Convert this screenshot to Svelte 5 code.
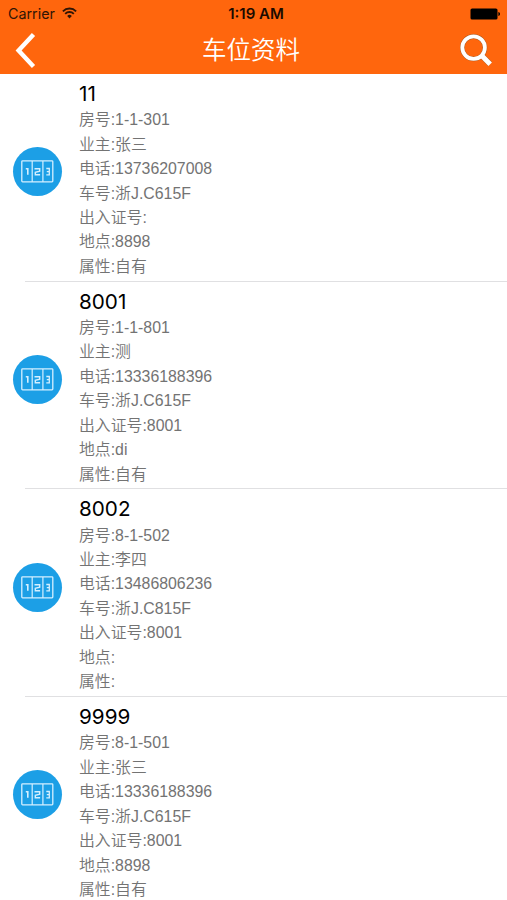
<script>
  const fields = [
    ['room', '房号'],
    ['owner', '业主'],
    ['phone', '电话'],
    ['plate', '车号'],
    ['pass', '出入证号'],
    ['place', '地点'],
    ['kind', '属性']
  ];

  const spaces = [
    { name: '11', room: '1-1-301', owner: '张三', phone: '13736207008', plate: '浙J.C615F', pass: '', place: '8898', kind: '自有' },
    { name: '8001', room: '1-1-801', owner: '测', phone: '13336188396', plate: '浙J.C615F', pass: '8001', place: 'di', kind: '自有' },
    { name: '8002', room: '8-1-502', owner: '李四', phone: '13486806236', plate: '浙J.C815F', pass: '8001', place: '', kind: '' },
    { name: '9999', room: '8-1-501', owner: '张三', phone: '13336188396', plate: '浙J.C615F', pass: '8001', place: '8898', kind: '自有' }
  ];
</script>

<div class="screen">
  <header>
    <div class="status-bar">
      <div class="carrier">
        <span>Carrier</span>
        <svg width="15" height="12" viewBox="0 0 15 12" fill="none" stroke="#301505" stroke-width="1.9">
          <path d="M0.9 4.3a9.3 9.3 0 0 1 13.2 0" />
          <path d="M3.2 6.8a6.1 6.1 0 0 1 8.6 0" />
          <path d="M7.5 11.4 5.2 8.9a3.3 3.3 0 0 1 4.6 0z" fill="#301505" stroke="none" />
        </svg>
      </div>
      <div class="time">1:19 AM</div>
      <div class="battery">
        <svg width="31" height="12" viewBox="0 0 31 12">
          <rect x="0.5" y="0.5" width="27" height="11" rx="1.6" />
          <path d="M28.4 4v4c2.1-.5 2.1-3.5 0-4z" />
        </svg>
      </div>
    </div>

    <nav>
      <button class="back" aria-label="返回">
        <svg width="22" height="36" viewBox="0 0 22 36" fill="none" stroke="#fff" stroke-width="4.4">
          <path d="M18.5 1.6 3.6 17.5 18.5 33.4" />
        </svg>
      </button>
      <h1>车位资料</h1>
      <button class="search" aria-label="搜索">
        <svg width="34" height="34" viewBox="0 0 34 34" fill="none">
          <g stroke="#a8571f" stroke-width="4.7">
            <circle cx="14.6" cy="13.6" r="11.3" />
            <path d="M23.1 22.1 31 30" stroke-width="5.7" />
          </g>
          <g stroke="#fff" stroke-width="3.8">
            <circle cx="14.6" cy="13.6" r="11.3" />
            <path d="M22.6 21.6 31.2 30.2" stroke-width="5" />
          </g>
        </svg>
      </button>
    </nav>
  </header>

  <ul>
    {#each spaces as space}
      <li>
        <div class="badge">
          <svg width="33" height="23" viewBox="0 0 33 23" fill="none" stroke="#d4efff">
            <rect x="0.8" y="0.8" width="31" height="21" rx="0.8" stroke-width="1.3" />
            <path d="M11.2 1v21M21.9 1v21" stroke-width="1.2" />
            <path d="M4.8 8.8h2v6" stroke-width="1.6" />
            <path d="M13.5 8.8h5.2v2.4l-4.4 1.2v2.4h4.8" stroke-width="1.4" />
            <path d="M25.3 8.5h3v6.3h-3M25.8 11.6h2.5" stroke-width="1.3" />
          </svg>
        </div>
        <div class="info">
          <h2>{space.name}</h2>
          {#each fields as [key, label]}
            <p>{label}:{space[key]}</p>
          {/each}
        </div>
      </li>
    {/each}
  </ul>
</div>

<style>
  :global(body) {
    background: #fff;
  }

  .screen {
    height: 900px;
    overflow: hidden;
    font-family: "Liberation Sans", "Noto Sans CJK SC", sans-serif;
  }

  header {
    height: 74px;
    background: #ff660d;
  }

  .status-bar {
    display: grid;
    grid-template-columns: 1fr auto 1fr;
    align-items: center;
    height: 27px;
    padding: 0 6px 0 8px;
    font-family: Inter, sans-serif;
    font-size: 14.3px;
    color: #301505;
  }

  .carrier {
    display: flex;
    align-items: center;
    gap: 7px;
  }

  .carrier svg {
    margin-top: -2px;
  }

  .time {
    padding-left: 3px;
    font-weight: 600;
    font-size: 15px;
    color: #1c0b00;
  }

  .battery {
    display: flex;
    justify-content: flex-end;
  }

  nav {
    display: flex;
    align-items: center;
    justify-content: space-between;
    height: 47px;
    padding: 0 14px 0 15px;
  }

  button {
    display: flex;
    width: 34px;
    padding: 0;
    border: 0;
    background: none;
    cursor: pointer;
  }

  .back {
    width: 28px;
  }

  h1 {
    margin: 0;
    font-size: 24.5px;
    font-weight: 350;
    line-height: 46px;
    color: #fff;
  }

  ul {
    margin: 0;
    padding: 0;
    list-style: none;
  }

  li {
    position: relative;
    display: flex;
    align-items: center;
    box-sizing: border-box;
    height: 207.7px;
    padding-left: 13px;
  }

  /* inset separator */
  li::after {
    content: "";
    position: absolute;
    left: 25px;
    right: 0;
    bottom: 0;
    height: 1px;
    background: #e0e0e2;
  }

  .badge {
    display: flex;
    align-items: center;
    justify-content: center;
    flex: none;
    width: 49px;
    height: 49px;
    margin-top: -12px;
    border-radius: 50%;
    background: #1c9fe6;
  }

  .info {
    align-self: flex-start;
    margin-left: 17px;
    padding-top: 5px;
  }

  h2 {
    margin: 0;
    font-family: Inter, sans-serif;
    font-size: 20.7px;
    font-weight: 400;
    line-height: 29.2px;
    color: #000;
  }

  p {
    margin: 0;
    font-size: 15.87px;
    font-weight: 350;
    line-height: 24.45px;
    color: #737373;
    white-space: nowrap;
  }
</style>
